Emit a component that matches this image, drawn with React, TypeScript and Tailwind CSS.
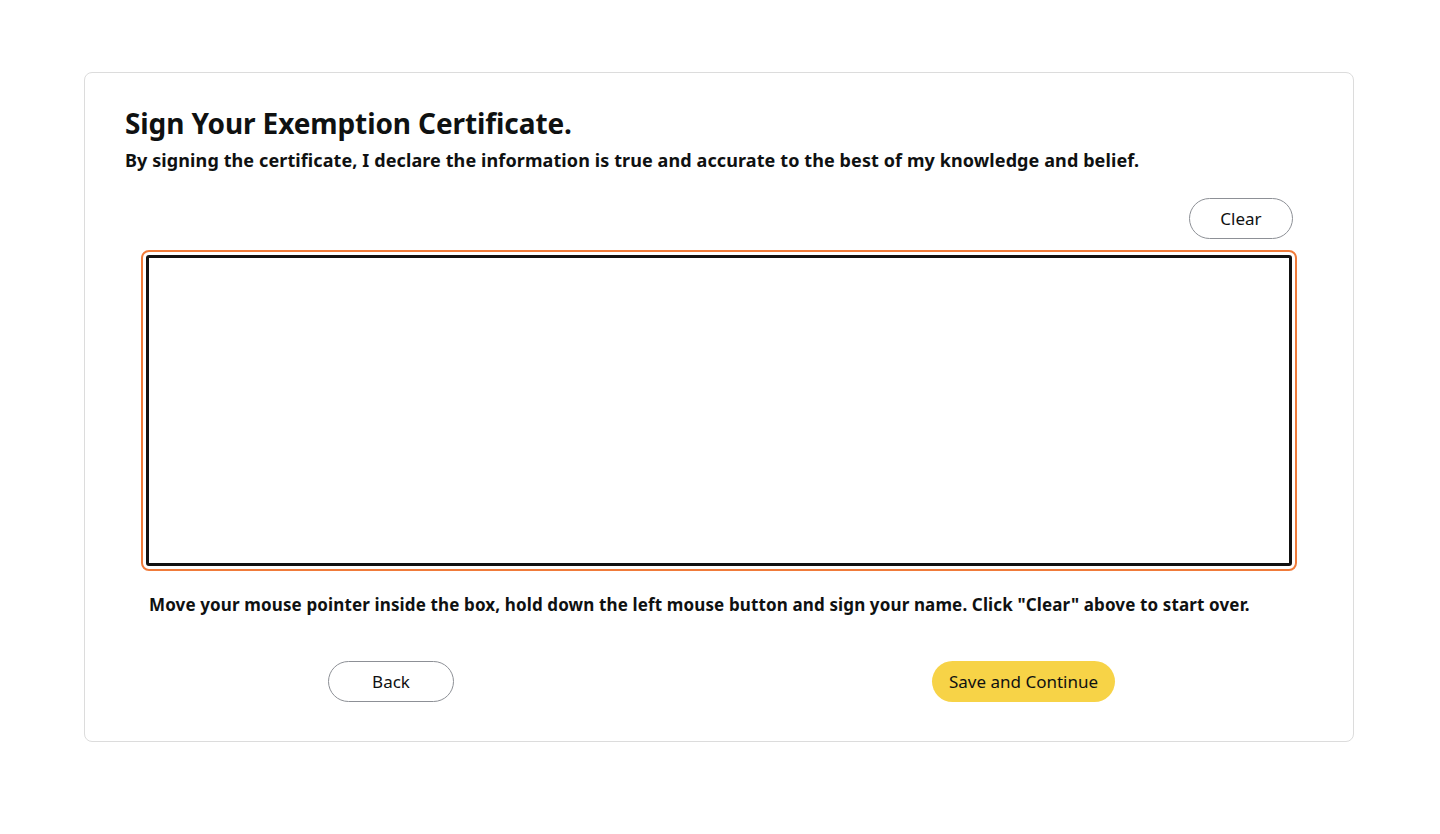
import React from 'react';

const font = { fontFamily: '"Noto Sans", "Open Sans", Arial, sans-serif' };

export default function App() {
    return (
        <div className="min-h-screen w-full bg-white pt-[72px] px-[84px]" style={font}>
            <div className="w-[1270px] h-[670px] border border-[#dcdcdc] rounded-[8px] px-[40px] pt-[30px]">
                {/* Header */}
                <h1 className="text-[28px] leading-[40px] font-bold text-[#0f1111] tracking-[-0.1px]">
                    Sign Your Exemption Certificate.
                </h1>
                <p className="mt-[4px] text-[18px] leading-[26px] font-bold text-[#0f1111] tracking-[0.1px]">
                    By signing the certificate, I declare the information is true and accurate to the best of my knowledge and belief.
                </p>

                {/* Clear button */}
                <div className="flex justify-end pr-[20px] mt-[25px]">
                    <button className="w-[104px] h-[41px] rounded-full border border-[#8d9096] bg-white text-[17px] text-[#0f1111]">
                        Clear
                    </button>
                </div>

                {/* Signature pad */}
                <div className="mx-[16px] mt-[11px] h-[321px] rounded-[8px] border-2 border-[#f07b3a] p-[3px]">
                    <div className="h-full w-full rounded-[3px] border-[3px] border-[#111] bg-white"></div>
                </div>

                <p className="mt-[21px] ml-[24px] text-[17px] leading-[26px] font-bold text-[#0f1111] tracking-[0.13px]">
                    Move your mouse pointer inside the box, hold down the left mouse button and sign your name. Click "Clear" above to start over.
                </p>

                {/* Actions */}
                <div className="flex mt-[43px] pl-[203px]">
                    <button className="w-[126px] h-[41px] rounded-full border border-[#8d9096] bg-white text-[17px] text-[#0f1111]">
                        Back
                    </button>
                    <button className="ml-[478px] w-[183px] h-[41px] rounded-full bg-[#f7d347] text-[17px] text-[#0f1111]">
                        Save and Continue
                    </button>
                </div>
            </div>
        </div>
    );
}
